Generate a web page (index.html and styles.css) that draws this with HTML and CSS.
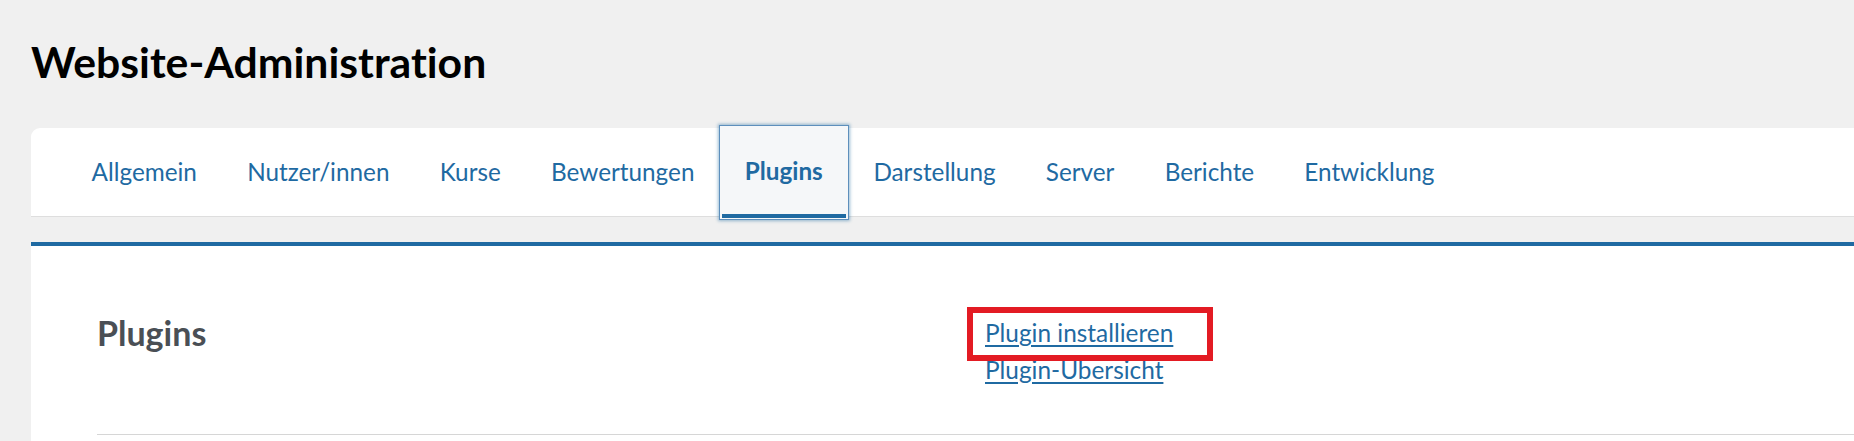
FILE: index.html
```html
<!DOCTYPE html>
<html lang="de">
<head>
<meta charset="utf-8">
<title>Website-Administration</title>
<link rel="stylesheet" href="styles.css">
</head>
<body>
<div class="page">
  <h1 class="page-title">Website-Administration</h1>
  <div class="card">
    <nav class="tabs">
      <a class="tab" href="#">Allgemein</a>
      <a class="tab" href="#">Nutzer/innen</a>
      <a class="tab" href="#">Kurse</a>
      <a class="tab" href="#">Bewertungen</a>
      <a class="tab active" href="#">Plugins</a>
      <a class="tab" href="#">Darstellung</a>
      <a class="tab" href="#">Server</a>
      <a class="tab" href="#">Berichte</a>
      <a class="tab" href="#">Entwicklung</a>
    </nav>
  </div>
  <div class="content">
    <div class="cat-row">
      <h2 class="cat-title">Plugins</h2>
      <ul class="cat-links">
        <li class="highlighted"><a href="#">Plugin installieren</a><span class="mark"></span></li>
        <li><a href="#">Plugin-Übersicht</a></li>
      </ul>
    </div>
    <hr class="divider">
  </div>
</div>
</body>
</html>
```
FILE: styles.css
```css
html, body {
  margin: 0;
  padding: 0;
}
body {
  background: #f0f0f0;
  font-family: Lato, "Open Sans", sans-serif;
  font-variant-ligatures: none;
  color: #1d2125;
  overflow: hidden;
}
.page {
  padding: 35px 0 0 31px;
}
.page-title {
  margin: 0;
  font-size: 42.7px;
  line-height: 53px;
  font-weight: 700;
  color: #000;
}
.card {
  margin-top: 40px;
  background: #fff;
  border-top-left-radius: 9px;
}
.tabs {
  display: flex;
  height: 88px;
  padding-left: 35.5px;
  border-bottom: 1px solid #dedede;
}
.tab {
  display: flex;
  align-items: center;
  padding: 0 25.1px;
  font-size: 24.3px;
  line-height: 1.5;
  color: #1f6aa2;
  text-decoration: none;
  position: relative;
}
.tab.active {
  font-weight: 700;
  background: #f5f7f9;
  margin: -2px 0 -3px;
  padding: 0 25.5px 2px 25.1px;
  box-shadow: 0 0 0 1px #5d8fbc, 0 0 3px 2px rgba(31, 106, 162, 0.45);
}
.tab.active::after {
  content: "";
  position: absolute;
  left: 2px;
  right: 2px;
  bottom: 1px;
  height: 4px;
  background: #1f6aa2;
}
.content {
  margin-top: 25px;
  background: #fff;
  border-top: 4px solid #1f6aa2;
  padding: 67px 0 0 66px;
  min-height: 300px;
}
.cat-row {
  display: grid;
  grid-template-columns: 888px 1fr;
}
.cat-title {
  margin: 0;
  font-size: 34px;
  line-height: 1.2;
  font-weight: 700;
  color: #4a4f55;
}
.cat-links {
  list-style: none;
  margin: 2px 0 0;
  padding: 0;
  font-size: 24.4px;
  line-height: 1.5;
}
.cat-links a {
  color: #1f6aa2;
  text-decoration: underline;
  text-underline-offset: 3px;
}
.highlighted {
  position: relative;
}
.mark {
  position: absolute;
  left: -18px;
  top: -8px;
  width: 246px;
  height: 54px;
  box-sizing: border-box;
  border: 6px solid #e31b23;
  pointer-events: none;
}
.divider {
  margin: 46px 0 0;
  border: 0;
  border-top: 1px solid #d6d6d6;
}
```
